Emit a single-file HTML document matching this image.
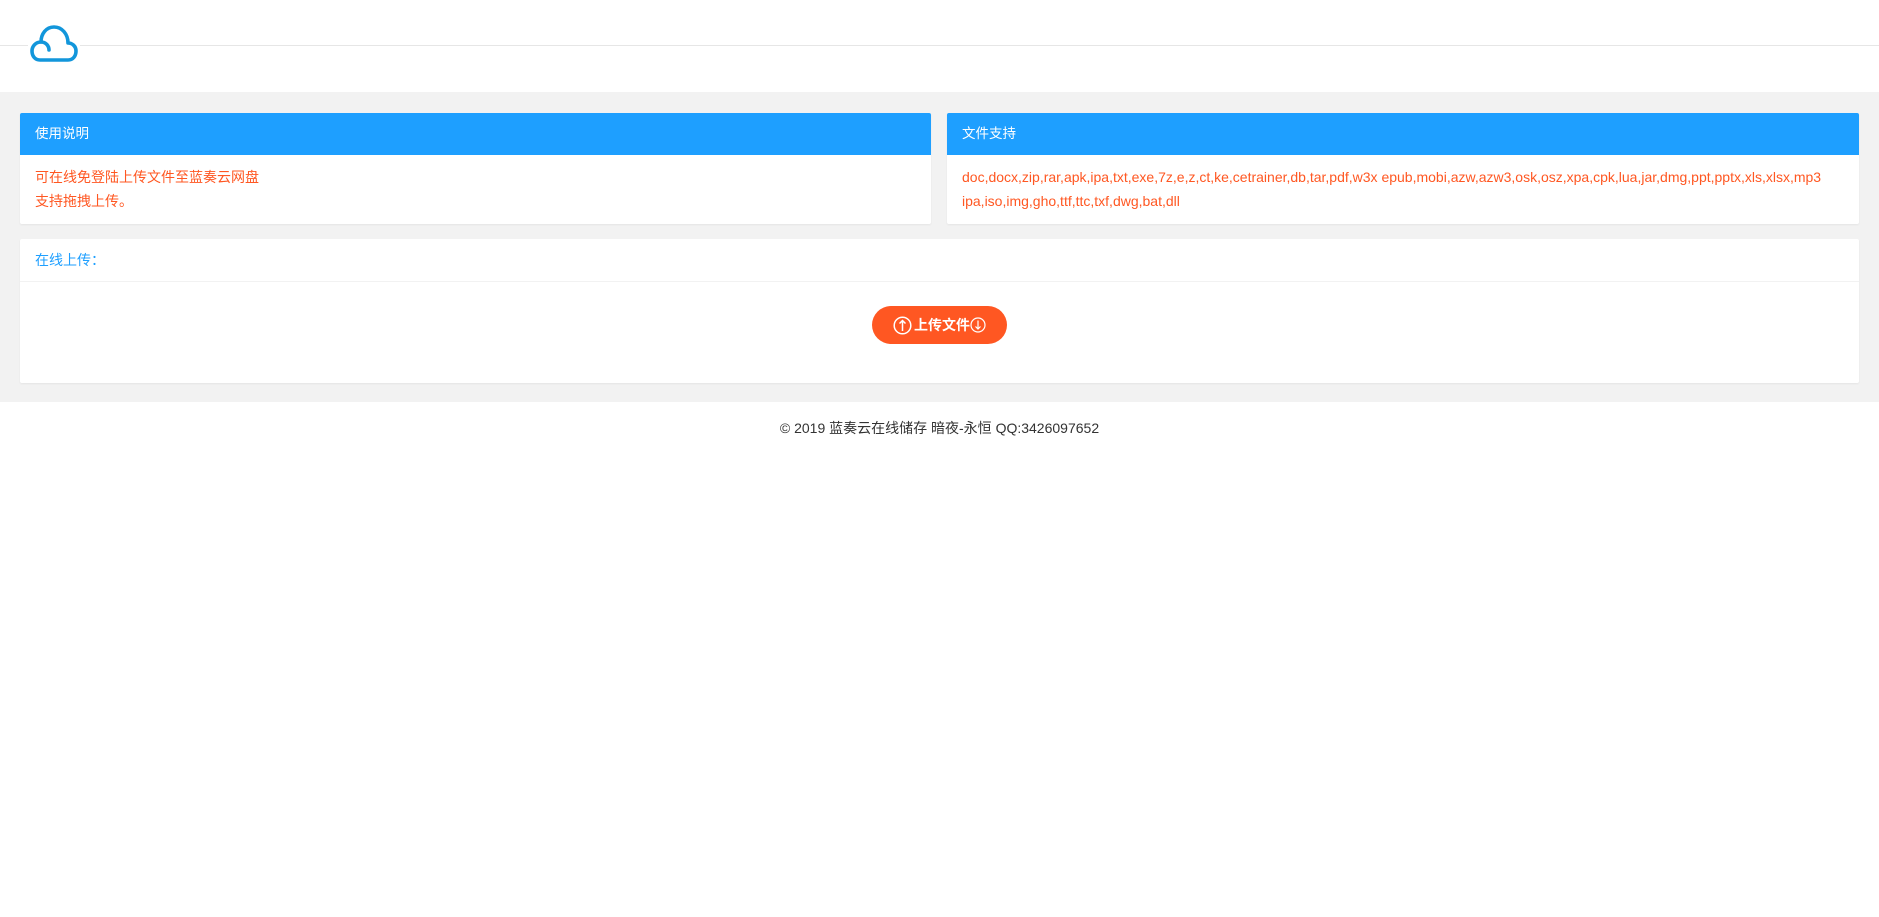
<!DOCTYPE html>
<html><head><meta charset="utf-8"><style>
*{margin:0;padding:0;box-sizing:border-box}
body{width:1879px;height:917px;background:#fff;font-family:"Liberation Sans","Noto Sans CJK SC",sans-serif;font-size:14px;position:relative;overflow:hidden}
.hdr{position:absolute;left:0;top:0;width:1879px;height:92px;background:#fff}
.hline{position:absolute;left:0;top:45px;width:1879px;height:1px;background:#e6e6e6}
.cloud{position:absolute;left:28px;top:23px;width:52px;height:40px;background:#fff}
.gray{position:absolute;left:0;top:92px;width:1879px;height:310px;background:#f2f2f2}
.card{position:absolute;background:#fff;border-radius:2px;box-shadow:0 1px 2px rgba(0,0,0,.06)}
.ch{height:42px;background:#1e9fff;color:#fff;padding-left:15px;line-height:42px;font-size:13.5px;border-radius:2px 2px 0 0}
.cb{padding:10px 15px;color:#ff5722;line-height:24px;font-size:14px}
.btn{position:absolute;left:872px;top:306px;width:135px;height:38px;border-radius:19px;background:#ff5722;color:#fff;font-size:14px;font-weight:bold;display:flex;align-items:center;justify-content:center}
.foot{position:absolute;top:418px;left:0;width:1879px;text-align:center;font-size:14px;color:#333}
</style></head><body>
<div class="hdr"><div class="hline"></div>
<svg class="cloud" viewBox="0 0 52 40"><path d="M14 37 H40 C45 37 48 33 48 28 C48 23 44 20 40 20 C40 11 34 4 26 4 C18 4 13 11 13 19 C8 19 4 23 4 28 C4 33 7 37 12 37 Z" fill="none" stroke="#1296db" stroke-width="3.6" stroke-linejoin="round"/><path d="M13 19 C18 19 21 23 21 27" fill="none" stroke="#1296db" stroke-width="3.6" stroke-linecap="round"/></svg>
</div>
<div class="gray"></div>
<div class="card" style="left:20px;top:113px;width:911px;height:111px"><div class="ch">使用说明</div><div class="cb">可在线免登陆上传文件至蓝奏云网盘<br>支持拖拽上传。</div></div>
<div class="card" style="left:947px;top:113px;width:912px;height:111px"><div class="ch">文件支持</div><div class="cb">doc,docx,zip,rar,apk,ipa,txt,exe,7z,e,z,ct,ke,cetrainer,db,tar,pdf,w3x epub,mobi,azw,azw3,osk,osz,xpa,cpk,lua,jar,dmg,ppt,pptx,xls,xlsx,mp3<br>ipa,iso,img,gho,ttf,ttc,txf,dwg,bat,dll</div></div>
<div class="card" style="left:20px;top:239px;width:1839px;height:144px"><div style="height:43px;line-height:43px;padding-left:15px;color:#1e9fff;border-bottom:1px solid #f2f2f2">在线上传：</div></div>
<div class="btn"><svg width="19" height="19" viewBox="0 0 19 19" style="margin-right:2px"><circle cx="9.5" cy="9.5" r="8.3" fill="none" stroke="#fff" stroke-width="1.5"/><path d="M9.5 15V4.5M6.5 7.5L9.5 4.5L12.5 7.5" fill="none" stroke="#fff" stroke-width="1.5"/></svg><span>上传文件</span><svg width="16" height="16" viewBox="0 0 16 16"><circle cx="8" cy="8" r="7" fill="none" stroke="#fff" stroke-width="1.2"/><path d="M8 3.5V12M5.5 9.5L8 12L10.5 9.5" fill="none" stroke="#fff" stroke-width="1.2"/></svg></div>
<div class="foot">© 2019 蓝奏云在线储存 暗夜-永恒 QQ:3426097652</div>
</body></html>
